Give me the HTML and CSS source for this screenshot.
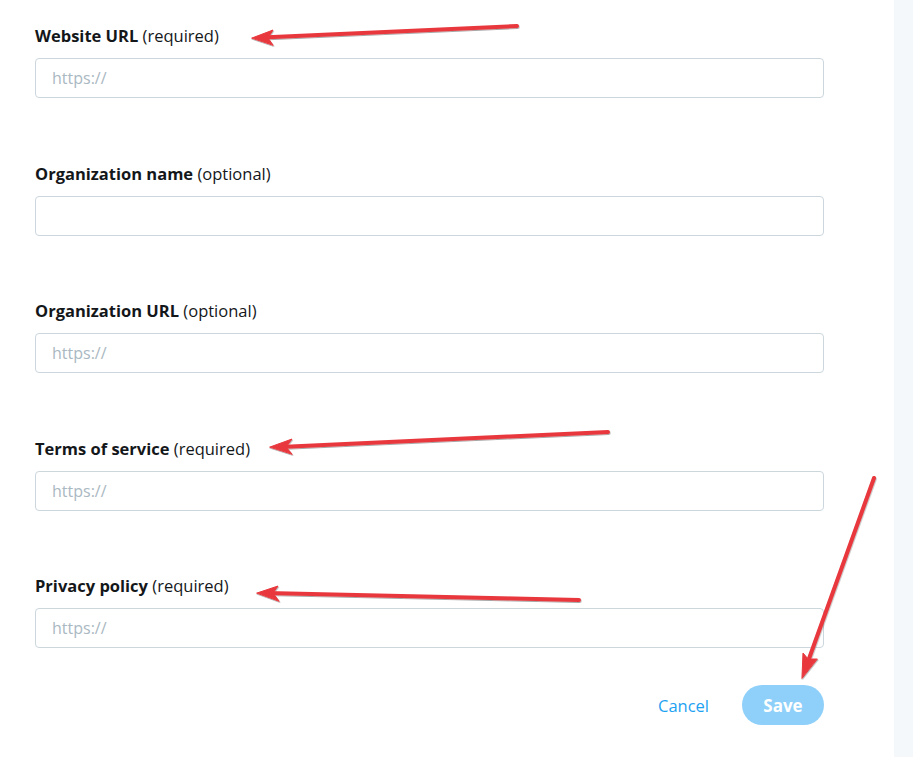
FILE: index.html
```html
<!DOCTYPE html>
<html lang="en">
<head>
<meta charset="utf-8">
<title>App details</title>
<link rel="stylesheet" href="styles.css">
</head>
<body>
<div class="page">
  <main class="panel">
    <form class="form">
      <div class="field">
        <label class="label"><b>Website URL</b> (required)</label>
        <input class="input" type="text" placeholder="https://">
      </div>
      <div class="field">
        <label class="label"><b>Organization name</b> (optional)</label>
        <input class="input" type="text">
      </div>
      <div class="field">
        <label class="label"><b>Organization URL</b> (optional)</label>
        <input class="input" type="text" placeholder="https://">
      </div>
      <div class="field">
        <label class="label"><b>Terms of service</b> (required)</label>
        <input class="input" type="text" placeholder="https://">
      </div>
      <div class="field field-last">
        <label class="label"><b>Privacy policy</b> (required)</label>
        <input class="input" type="text" placeholder="https://">
      </div>
      <div class="actions">
        <button type="button" class="btn-cancel">Cancel</button>
        <button type="button" class="btn-save">Save</button>
      </div>
    </form>
  </main>
  <aside class="strip"></aside>
  <svg class="arrows" width="913" height="757" viewBox="0 0 913 757">
    <defs>
      <filter id="sh" x="-10%" y="-50%" width="120%" height="200%">
        <feDropShadow dx="0.5" dy="1" stdDeviation="0.6" flood-color="#000" flood-opacity="0.35"/>
      </filter>
    </defs>
    <g fill="#e8383d" stroke="#e8383d" stroke-width="4" stroke-linecap="round" stroke-linejoin="round" filter="url(#sh)">
      <line x1="517" y1="26" x2="262" y2="37.5"/>
      <polygon stroke-width="1" points="252,38 273,30 268,38 273,45"/>
      <line x1="608" y1="432" x2="280" y2="447"/>
      <polygon stroke-width="1" points="270,447 292,439 286,447 292,454"/>
      <line x1="579" y1="600" x2="267" y2="593"/>
      <polygon stroke-width="1" points="257,593 278,586 273,593 279,601"/>
      <line x1="874" y1="478" x2="806" y2="667"/>
      <polygon stroke-width="1" points="802,678 803,653 808,659 817,659"/>
    </g>
  </svg>
</div>
</body>
</html>
```

FILE: styles.css
```css
* { box-sizing: border-box; }
html, body { margin: 0; padding: 0; background: #fff; }
body {
  font-family: "Open Sans", "Noto Sans", "Liberation Sans", sans-serif;
  color: #14171a;
  width: 913px;
  height: 757px;
  overflow: hidden;
}
.page {
  position: relative;
  display: flex;
  width: 913px;
  height: 757px;
}
.panel {
  width: 894px;
  flex: none;
  background: #fff;
}
.strip {
  flex: 1;
  background: #f5f8fa;
}
.form {
  display: flex;
  flex-direction: column;
  padding: 26px 0 0 35px;
  width: 824px;
}
.field {
  display: flex;
  flex-direction: column;
  gap: 12px;
  margin-bottom: 65.5px;
}
.field-last { margin-bottom: 37px; }
.label {
  font-size: 16.5px;
  line-height: 20px;
  height: 20px;
  white-space: nowrap;
}
.label b { font-weight: 700; }
.input {
  height: 40px;
  width: 789px;
  border: 1px solid #ccd6dd;
  border-radius: 4px;
  padding: 0 16px;
  font-family: inherit;
  font-size: 16px;
  color: #14171a;
  outline: none;
  background: #fff;
}
.input::placeholder { color: #aab8c2; }
.actions {
  display: flex;
  justify-content: flex-end;
  align-items: center;
  gap: 17px;
}
.btn-cancel {
  background: none;
  border: none;
  color: #1da1f2;
  font-family: inherit;
  font-size: 16.5px;
  padding: 0 16px;
  height: 40px;
  cursor: pointer;
}
.btn-save {
  width: 82px;
  height: 40px;
  border: none;
  border-radius: 20px;
  background: #8ed0f9;
  color: #fff;
  font-family: inherit;
  font-size: 17px;
  font-weight: 700;
  cursor: pointer;
}
.arrows {
  position: absolute;
  top: 0;
  left: 0;
  pointer-events: none;
}
```
